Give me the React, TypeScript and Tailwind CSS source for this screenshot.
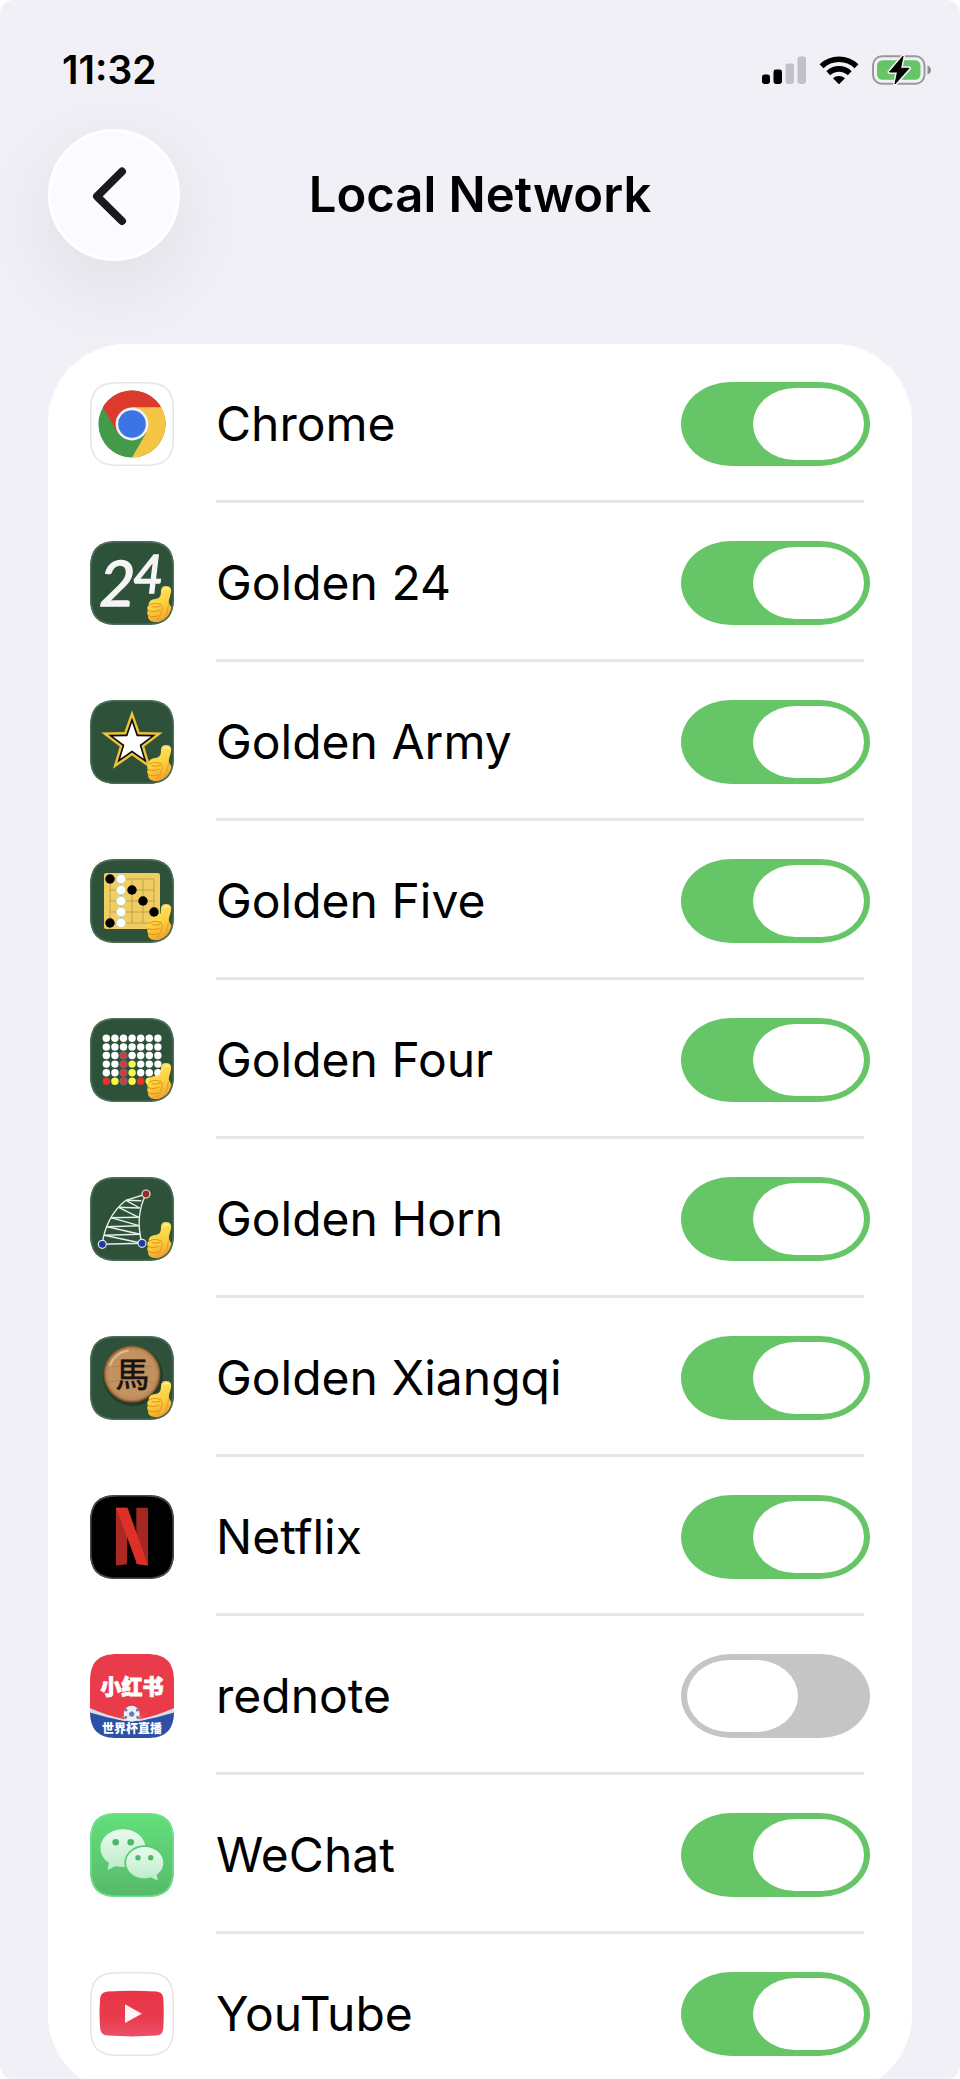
import { useState } from "react";
import type { ReactNode } from "react";

const SQUIRCLE =
  "M0 28C0 8 8 0 28 0H56C76 0 84 8 84 28V56C84 76 76 84 56 84H28C8 84 0 76 0 56Z";

function starPoints(cx: number, cy: number, radius: number) {
  const points: string[] = [];
  for (let i = 0; i < 10; i++) {
    const r = i % 2 === 0 ? radius : radius * 0.4;
    const angle = (Math.PI / 5) * i - Math.PI / 2;
    points.push(`${cx + r * Math.cos(angle)},${cy + r * Math.sin(angle)}`);
  }
  return points.join(" ");
}

type IconFrameProps = {
  id: string;
  fill: string;
  edge: string;
  children: ReactNode;
};

function IconFrame({ id, fill, edge, children }: IconFrameProps) {
  return (
    <svg viewBox="0 0 84 84" className="size-[84px] shrink-0" aria-hidden="true">
      <defs>
        <clipPath id={`${id}-clip`}>
          <path d={SQUIRCLE} />
        </clipPath>
      </defs>
      <g clipPath={`url(#${id}-clip)`}>
        <rect width="84" height="84" fill={fill} />
        {children}
        <path d={SQUIRCLE} fill="none" stroke={edge} strokeWidth="3" />
      </g>
    </svg>
  );
}

function ThumbsUp({ id }: { id: string }) {
  return (
    <g>
      <defs>
        <linearGradient id={`${id}-thumb`} x1="0.3" y1="0" x2="0.6" y2="1">
          <stop offset="0" stopColor="#ffe566" />
          <stop offset="0.55" stopColor="#fdd03c" />
          <stop offset="1" stopColor="#f2a02b" />
        </linearGradient>
      </defs>
      <path
        d="M71.5 47.5C72.6 44.8 76 44.4 78.8 45.6C81.4 46.8 81.6 49.4 80.8 52.5C80 56 78.6 59 78.8 61.5C79 63.6 81.6 65.4 82 68.5C82.3 72 80.4 76 77.4 78.4C73.6 81.2 66.5 81.8 61.8 80.4C58.6 79.4 57.6 76.6 58.2 74.8C57 73.2 56.9 71 57.9 69.6C56.8 67.6 57.2 65.2 58.7 64.2C58.4 61.4 60.4 58.6 64 58.3C67.6 58 70 56.4 70.6 54C71.2 51.6 70.6 49.6 71.5 47.5Z"
        fill={`url(#${id}-thumb)`}
      />
      <path
        d="M59 64.4C61.4 62.2 66 61.8 69.4 63.4M58.2 69.6C61.4 71 65.6 70.8 69 69.2M58.6 74.8C61.6 76.2 65.6 76 68.6 74.6M62 65.6C64.6 66.4 67.4 66.2 69.6 65.4"
        fill="none"
        stroke="#df9020"
        strokeWidth="1"
        strokeLinecap="round"
      />
      <path
        d="M70 63C72.4 65.4 72.6 68.6 70.8 71.6C70.6 75 68.8 77.4 66.4 78.8M78.4 64C77.4 70 77 74 73.6 78.6"
        fill="none"
        stroke="#e8a02a"
        strokeWidth="1.2"
        strokeLinecap="round"
      />
      <path d="M74.5 48.5C75.4 47 77.4 47 78.4 48.2" fill="none" stroke="#fff3a0" strokeWidth="1.4" strokeLinecap="round" />
    </g>
  );
}

function GoldenIcon({ id, children }: { id: string; children: ReactNode }) {
  return (
    <IconFrame id={id} fill="#2e5239" edge="#4d6c56">
      {children}
      <ThumbsUp id={id} />
    </IconFrame>
  );
}

function ChromeIcon() {
  return (
    <IconFrame id="chrome" fill="#ffffff" edge="#e6e6e6">
      <g transform="translate(42 42)">
        <circle r="33.6" fill="#439b4a" />
        <path d="M-29.1 -16.8A33.6 33.6 0 0 1 29.1 -16.8H0L0 0L-14.5 8.4Z" fill="#dd3a2d" />
        <path d="M29.1 -16.8A33.6 33.6 0 0 1 0 33.6L14.5 8.4L0 0V-16.8Z" fill="#f5c444" />
        <circle r="16.4" fill="#f1f1f6" />
        <circle r="13.8" fill="#3c74e3" />
      </g>
    </IconFrame>
  );
}

function Golden24Icon() {
  return (
    <GoldenIcon id="golden-24">
      <g
        fill="#f5f5f5"
        stroke="#f5f5f5"
        strokeWidth="1.4"
        fontFamily="Lato, 'Liberation Sans', sans-serif"
        fontStyle="italic"
      >
        <text x="9" y="65" fontSize="63">2</text>
        <text x="43" y="52" fontSize="52">4</text>
      </g>
    </GoldenIcon>
  );
}

function GoldenArmyIcon() {
  return (
    <GoldenIcon id="golden-army">
      <polygon points={starPoints(42, 42.6, 32.4)} fill="#eec33a" />
      <polygon points={starPoints(42, 42.6, 25)} fill="#0b0b0b" />
      <polygon points={starPoints(42, 42.6, 20)} fill="#ffffff" />
    </GoldenIcon>
  );
}

const grid = [20, 31, 42, 53, 64];
const blackStones = [
  [20, 20],
  [42, 31],
  [53, 42],
  [64, 53],
  [20, 64],
];

function GoldenFiveIcon() {
  return (
    <GoldenIcon id="golden-five">
      <rect x="14" y="14" width="56" height="56" rx="2" fill="#efcd62" />
      {grid.map((p) => (
        <path key={p} d={`M20 ${p}H64M${p} 20V64`} stroke="#b99a45" strokeWidth="0.8" />
      ))}
      {blackStones.map(([x, y]) => (
        <circle key={`${x}-${y}`} cx={x} cy={y} r="4.7" fill="#000000" />
      ))}
      {grid.map((y) => (
        <circle key={y} cx="31" cy={y} r="4.6" fill="#ffffff" stroke="#b5dce0" strokeWidth="0.8" />
      ))}
    </GoldenIcon>
  );
}

const fourBoard = ["wwwwwww", "wwwwwww", "wwRwwww", "wwRywww", "wwRywww", "ryRyryw"];
const discColors: Record<string, string> = { w: "#ffffff", r: "#e8322c", R: "#e8322c", y: "#fbf64a" };

function GoldenFourIcon() {
  return (
    <GoldenIcon id="golden-four">
      {fourBoard.map((row, r) =>
        row.split("").map((disc, c) => (
          <circle
            key={`${r}-${c}`}
            cx={16.3 + c * 8.6}
            cy={20.3 + r * 8.6}
            r="3.7"
            fill={discColors[disc]}
            stroke={disc === "R" ? "#54789a" : "none"}
            strokeWidth="0.9"
          />
        ))
      )}
    </GoldenIcon>
  );
}

function GoldenHornIcon() {
  return (
    <GoldenIcon id="golden-horn">
      <g fill="none" stroke="#e9efe9" strokeWidth="1.4">
        <path d="M12.3 67.3C14 51 22 34 36 23.3L56 17C48 33 47 48 52 66.3Z" />
        <path d="M36 23.3L51.3 23.7M28.7 30.3L49.7 31M21 40.7L48.7 40.3M17.3 49.7L49 48.7M14.3 58.3L50 57.3" />
        <path d="M36 23.3L49.7 31M28.7 30.3L48.7 40.3M21 40.7L49 48.7M17.3 49.7L50 57.3M14.3 58.3L52 66.3" />
      </g>
      <g stroke="#e4e7ee" strokeWidth="1.2">
        <circle cx="12.3" cy="67.3" r="4" fill="#2139a8" />
        <circle cx="52" cy="66.3" r="4" fill="#2139a8" />
        <circle cx="56" cy="17" r="4" fill="#9c2a24" />
      </g>
    </GoldenIcon>
  );
}

function GoldenXiangqiIcon() {
  return (
    <GoldenIcon id="golden-xiangqi">
      <defs>
        <radialGradient id="wood">
          <stop offset="0.8" stopColor="#c29260" />
          <stop offset="0.9" stopColor="#bb8754" />
          <stop offset="1" stopColor="#6b4424" />
        </radialGradient>
      </defs>
      <circle cx="43" cy="40" r="30" fill="#1c3524" opacity="0.7" />
      <circle cx="42" cy="38" r="28.6" fill="url(#wood)" />
      <path d="M20 29A24 24 0 0 1 38 14.5" fill="none" stroke="#e6c8a0" strokeWidth="2" strokeLinecap="round" opacity="0.8" />
      <path d="M19 46Q42 42 66 47M22 31Q44 27 63 31" fill="none" stroke="#ad7d4c" strokeWidth="0.7" />
      <text
        x="42.5"
        y="51"
        fontSize="34"
        textAnchor="middle"
        fill="#161412"
        stroke="#161412"
        strokeWidth="0.6"
        fontFamily="'Noto Sans CJK TC', sans-serif"
      >
        馬
      </text>
    </GoldenIcon>
  );
}

function NetflixIcon() {
  return (
    <IconFrame id="netflix" fill="#000000" edge="#4a4a4a">
      <path d="M26 12.7H37V69.3L26 70.4Z" fill="#ab2823" />
      <path d="M46.3 12.7H58V70.4L46.3 69Z" fill="#a52722" />
      <path d="M26 12.7H37.6L58 70.4L47 69Z" fill="#dc3029" />
    </IconFrame>
  );
}

function RednoteIcon() {
  return (
    <IconFrame id="rednote" fill="#e93b49" edge="transparent">
      <path d="M22 54L36 66H48L62 54L52 62H31Z" fill="#f28a8c" opacity="0.7" />
      <path d="M0 54Q18 62 34 65H50Q66 62 84 54V84H0Z" fill="#d9dbe0" />
      <path d="M0 58.5Q18 64 34 67H50Q66 64 84 58.500V84H0Z" fill="#2c50a6" />
      <circle cx="41.7" cy="59.8" r="8" fill="#eceef6" />
      <g fill="#6c78b4">
        <path d="M41.700 57L44.600 59.200L43.500 62.500H39.900L38.800 59.200Z" />
        <circle cx="36" cy="56" r="1.5" />
        <circle cx="47.4" cy="56" r="1.5" />
        <circle cx="35.8" cy="63.4" r="1.4" />
        <circle cx="47.6" cy="63.4" r="1.4" />
      </g>
      <g fill="#ffffff" fontFamily="'Noto Sans CJK SC', sans-serif" fontWeight="900" textAnchor="middle">
        <text x="42" y="39.5" fontSize="21" stroke="#ffffff" strokeWidth="0.8">小红书</text>
        <text x="42" y="78.5" fontSize="12">世界杯直播</text>
      </g>
    </IconFrame>
  );
}

function WeChatIcon() {
  return (
    <IconFrame id="wechat" fill="url(#wechat-bg)" edge="#70e08c">
      <defs>
        <linearGradient id="wechat-bg" x1="0" y1="0" x2="0" y2="1">
          <stop offset="0" stopColor="#63e07c" />
          <stop offset="1" stopColor="#57b969" />
        </linearGradient>
        <linearGradient id="wechat-bubble" x1="0" y1="0" x2="0" y2="1">
          <stop offset="0" stopColor="#e9fbed" />
          <stop offset="1" stopColor="#bcebc8" />
        </linearGradient>
      </defs>
      <path
        d="M33 16.3C20.5 16.3 10.5 24.6 10.5 35.2C10.5 41.2 13.6 46.3 19 50L17.6 55.8C17.5 57 18.2 57 19 56.6L25.6 52.9C28 53.7 30.4 54 33 54C45.5 54 55.5 45.8 55.5 35.2C55.5 24.6 45.5 16.3 33 16.3Z"
        fill="url(#wechat-bubble)"
      />
      <ellipse cx="54.7" cy="49.7" rx="20.4" ry="17.4" fill="#58cb70" />
      <path
        d="M54.7 34C65 34 73.3 41 73.3 49.7C73.3 54.7 70.8 58.8 66.6 61.7L67.7 66.2C67.8 67.2 67.1 67.3 66.3 66.9L60.9 64.3C58.9 65 56.9 65.3 54.7 65.3C44.4 65.3 36.1 58.4 36.1 49.7C36.1 41 44.4 34 54.7 34Z"
        fill="url(#wechat-bubble)"
      />
      <g fill="#4fb866">
        <circle cx="25.7" cy="29.3" r="3.3" />
        <circle cx="40.7" cy="29.3" r="3.3" />
        <circle cx="48" cy="44.7" r="2.7" />
        <circle cx="60.7" cy="44.7" r="2.7" />
      </g>
    </IconFrame>
  );
}

function YouTubeIcon() {
  return (
    <IconFrame id="youtube" fill="#ffffff" edge="#e6e6e6">
      <defs>
        <linearGradient id="youtube-bg" x1="0" y1="0" x2="0" y2="1">
          <stop offset="0" stopColor="#e83546" />
          <stop offset="0.6" stopColor="#e93b4e" />
          <stop offset="1" stopColor="#ea5168" />
        </linearGradient>
      </defs>
      <path
        d="M18 19.4Q42 18 66 19.4C71 19.8 72.9 22 73.3 27Q74.2 41.5 73.3 56C72.9 61 71 63.2 66 63.6Q42 65.2 18 63.6C13 63.2 10.6 61 10.1 56Q9 41.5 10.1 27C10.6 22 13 19.8 18 19.4Z"
        fill="url(#youtube-bg)"
      />
      <path d="M35 32.3L51.8 41.7L35 51.1Z" fill="#fff3f4" />
    </IconFrame>
  );
}

function SignalIcon() {
  return (
    <svg viewBox="0 0 44 30" className="h-[30px] w-11" aria-hidden="true">
      <rect x="0" y="19.5" width="8" height="9.5" rx="2.4" fill="#000000" />
      <rect x="11.5" y="14.5" width="8.5" height="14.5" rx="2.4" fill="#000000" />
      <rect x="23.5" y="8.5" width="8.5" height="20.5" rx="2.4" fill="#c2c1c7" />
      <rect x="35.5" y="1.5" width="8.5" height="27.5" rx="2.4" fill="#c2c1c7" />
    </svg>
  );
}

function WifiIcon() {
  return (
    <svg viewBox="0 0 40 30" className="h-[30px] w-10" aria-hidden="true">
      <g fill="none" stroke="#000000" strokeWidth="5.6">
        <path d="M2.5 11.2A25.5 25.5 0 0 1 37.5 11.2" />
        <path d="M9.3 18.2A15.5 15.5 0 0 1 30.7 18.2" />
      </g>
      <path d="M14 23.2A9 9 0 0 1 26 23.2L20.6 28.8Q20 29.3 19.4 28.8Z" fill="#000000" />
    </svg>
  );
}

function BatteryIcon() {
  return (
    <svg viewBox="0 0 60 32" className="h-8 w-[60px]" aria-hidden="true">
      <rect x="1" y="2.2" width="51.5" height="27.6" rx="9" fill="none" stroke="#99989d" strokeWidth="2" />
      <rect x="5" y="6.2" width="43.5" height="19.6" rx="5.5" fill="#66c567" />
      <path d="M55.5 11.5C58 12.5 59 14 59 16C59 18 58 19.5 55.5 20.5Z" fill="#8f8e93" />
      <path
        d="M31 2.2L17.5 18H25.5L23 30L37 14.3H28.6Z"
        fill="#f1f0f6"
        stroke="#f1f0f6"
        strokeWidth="4"
        strokeLinejoin="round"
      />
      <path
        d="M31 2.2L17.5 18H25.5L23 30L37 14.3H28.6Z"
        fill="#000000"
        stroke="#000000"
        strokeWidth="1"
        strokeLinejoin="round"
      />
    </svg>
  );
}

const apps = [
  { id: "chrome", name: "Chrome", icon: <ChromeIcon />, allowed: true },
  { id: "golden-24", name: "Golden 24", icon: <Golden24Icon />, allowed: true },
  { id: "golden-army", name: "Golden Army", icon: <GoldenArmyIcon />, allowed: true },
  { id: "golden-five", name: "Golden Five", icon: <GoldenFiveIcon />, allowed: true },
  { id: "golden-four", name: "Golden Four", icon: <GoldenFourIcon />, allowed: true },
  { id: "golden-horn", name: "Golden Horn", icon: <GoldenHornIcon />, allowed: true },
  { id: "golden-xiangqi", name: "Golden Xiangqi", icon: <GoldenXiangqiIcon />, allowed: true },
  { id: "netflix", name: "Netflix", icon: <NetflixIcon />, allowed: true },
  { id: "rednote", name: "rednote", icon: <RednoteIcon />, allowed: false },
  { id: "wechat", name: "WeChat", icon: <WeChatIcon />, allowed: true },
  { id: "youtube", name: "YouTube", icon: <YouTubeIcon />, allowed: true },
];

type AppRowProps = {
  id: string;
  name: string;
  icon: ReactNode;
  checked: boolean;
  onToggle: () => void;
};

function AppRow({ id, name, icon, checked, onToggle }: AppRowProps) {
  return (
    <li className="group flex gap-[42px] pr-12 pl-[42px]">
      <div className="pt-[38px]">{icon}</div>
      <div className="flex flex-1 items-center justify-between border-b-[3px] border-[#e6e6e6] pt-[38px] pb-[34px] group-last:border-transparent">
        <label htmlFor={`${id}-switch`} className="text-[48px] leading-[84px] whitespace-nowrap">
          {name}
        </label>
        <input
          id={`${id}-switch`}
          type="checkbox"
          role="switch"
          checked={checked}
          onChange={onToggle}
          className="-mr-1.5 h-[84px] w-[189px] shrink-0 cursor-pointer appearance-none rounded-[50px/42px] bg-[#c5c5c5] p-1.5 before:block before:h-[72px] before:w-[111px] before:rounded-[42px/36px] before:bg-white checked:bg-[#66c567] checked:before:ml-[66px]"
        />
      </div>
    </li>
  );
}

export default function App() {
  const [allowed, setAllowed] = useState<Record<string, boolean>>(
    Object.fromEntries(apps.map((app) => [app.id, app.allowed]))
  );

  const toggle = (id: string) => setAllowed((prev) => ({ ...prev, [id]: !prev[id] }));

  return (
    <div className="h-screen bg-white font-[Inter,'Liberation_Sans',sans-serif] text-black">
      <div className="h-full overflow-hidden rounded-[14px] bg-[#f1f0f6] px-12">
        {/* Status bar */}
        <div className="-mr-5 flex items-center justify-between pt-12 pl-[14px]">
          <span className="text-[39px] leading-[44px] font-semibold">11:32</span>
          <div className="flex items-center gap-[13px]">
            <SignalIcon />
            <WifiIcon />
            <BatteryIcon />
          </div>
        </div>

        {/* Navigation bar */}
        <header className="grid grid-cols-[1fr_auto_1fr] items-center pt-[37px]">
          <button
            type="button"
            aria-label="Back"
            className="flex size-[132px] cursor-pointer items-center justify-center rounded-full border-[3px] border-white bg-[#fafaff] shadow-[0_24px_100px_rgba(0,0,0,0.09)]"
          >
            <svg viewBox="0 0 126 126" className="size-full" aria-hidden="true">
              <path d="M71 39.5L46 64.3L71 89" fill="none" stroke="#1b1a1f" strokeWidth="8" strokeLinecap="round" strokeLinejoin="round" />
            </svg>
          </button>
          <h1 className="text-[49px] leading-[60px] font-semibold">Local Network</h1>
        </header>

        {/* App permissions */}
        <main className="pt-[83px]">
          <ul className="rounded-[78px] bg-white">
            {apps.map((app) => (
              <AppRow
                key={app.id}
                id={app.id}
                name={app.name}
                icon={app.icon}
                checked={allowed[app.id]}
                onToggle={() => toggle(app.id)}
              />
            ))}
          </ul>
        </main>
      </div>
    </div>
  );
}
